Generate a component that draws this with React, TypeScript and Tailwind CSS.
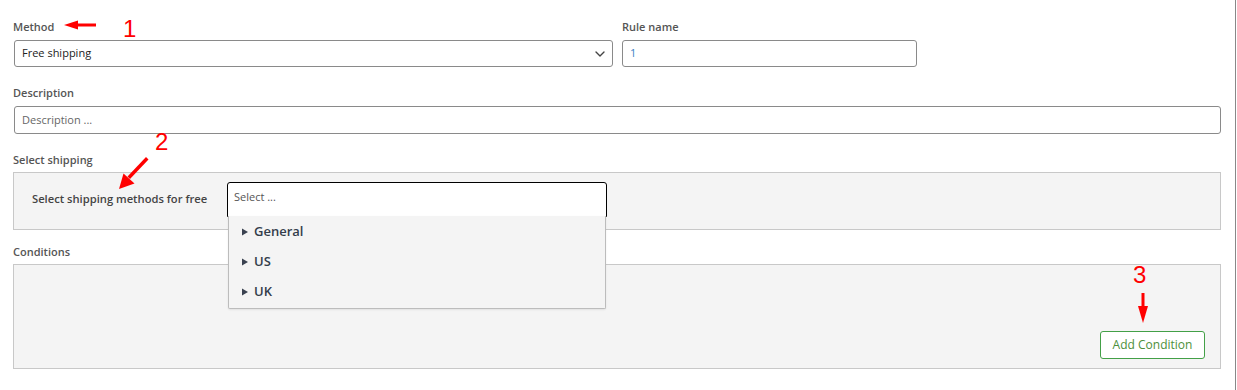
import { ChevronDown } from "lucide-react";

const font = { fontFamily: '"Open Sans", "Liberation Sans", sans-serif' };

function Label({ children }: { children: React.ReactNode }) {
  return (
    <div className="h-[14px] text-[11px] leading-[14px] font-semibold text-[#555]">
      {children}
    </div>
  );
}

function Triangle() {
  return (
    <svg width="8" height="8" viewBox="0 0 8 8" className="mr-[5px]">
      <path d="M1 0.5 L7 4 L1 7.5 Z" fill="#3a4250" />
    </svg>
  );
}

export default function App() {
  return (
    <div style={font} className="relative h-[390px] w-[1236px] border-r border-[#888] bg-white">
      <div className="flex flex-col pl-[13px] pt-[20px]">
        {/* method + rule name */}
        <div className="flex gap-[9px]">
          <div className="flex w-[600px] flex-col gap-[6px]">
            <Label>Method</Label>
            <div className="ml-px flex h-[27px] items-center justify-between rounded-[3px] border border-[#8a8a8a] pl-[7px] pr-[4px] text-[11px] text-[#222]">
              <span>Free shipping</span>
              <ChevronDown size={16} strokeWidth={2} color="#444" />
            </div>
          </div>
          <div className="flex w-[295px] flex-col gap-[6px]">
            <Label>Rule name</Label>
            <div className="flex h-[27px] items-center rounded-[3px] border border-[#8a8a8a] pl-[7px] text-[11px] text-[#3b7fc4]">
              1
            </div>
          </div>
        </div>

        {/* description */}
        <div className="mt-[19px] flex w-[1208px] flex-col gap-[6px]">
          <Label>Description</Label>
          <div className="ml-px flex h-[28px] items-center rounded-[3px] border border-[#8a8a8a] pl-[7px] text-[11px] text-[#666]">
            Description ...
          </div>
        </div>

        {/* select shipping */}
        <div className="mt-[19px] flex w-[1208px] flex-col gap-[5px]">
          <Label>Select shipping</Label>
          <div className="flex h-[58px] items-start border border-[#c8c8c8] bg-[#f4f4f4] pt-[9px]">
            <div className="flex h-[35px] w-[213px] items-center pl-[18px] text-[11.2px] font-semibold text-[#444]">
              Select shipping methods for free
            </div>
            <div className="relative w-[380px]">
              <div className="flex h-[35px] items-center rounded-t-[3px] border border-black bg-white pb-[4px] pl-[6px] text-[11px] text-[#555]">
                Select ...
              </div>
              <div className="absolute left-px right-px top-[34px] z-10 flex flex-col rounded-b-[2px] border border-t-0 border-[#bcbcbc] bg-[#f4f4f4] pb-[1px] pt-[1px] text-[13px] font-semibold text-[#333d4b] shadow-[0_1px_2px_rgba(0,0,0,0.08)]">
                {["General", "US", "UK"].map((g) => (
                  <div key={g} className="flex h-[30px] items-center pl-[12px]">
                    <Triangle />
                    {g}
                  </div>
                ))}
              </div>
            </div>
          </div>
        </div>

        {/* conditions */}
        <div className="mt-[15px] flex w-[1208px] flex-col gap-[5px]">
          <Label>Conditions</Label>
          <div className="flex h-[105px] items-end justify-end border border-[#c8c8c8] bg-[#f4f4f4] pb-[9px] pr-[15px]">
            <button className="h-[28px] w-[105px] rounded-[3px] border border-[#43a047] bg-white text-[12px] text-[#4d8f3a]">
              Add Condition
            </button>
          </div>
        </div>
      </div>

      {/* annotations */}
      <svg className="pointer-events-none absolute left-0 top-0 z-20" width="1236" height="390">
        <g fill="#ff0000" stroke="none">
          <rect x="76" y="23.5" width="20" height="3" />
          <path d="M64 25 L78 20.5 L78 29.5 Z" />
          <path d="M146 157 L148.5 159.5 L130 179 L127.5 176.5 Z" />
          <path d="M119 189 L123.5 173.5 L134.5 183.5 Z" />
          <rect x="1141.5" y="293" width="3" height="15" />
          <path d="M1138 306 L1148 306 L1143 323 Z" />
        </g>
        <g fill="#ff0000" fontFamily="Liberation Sans, sans-serif" fontSize="24">
          <text x="123" y="37">1</text>
          <text x="155" y="150">2</text>
          <text x="1133" y="283">3</text>
        </g>
      </svg>
    </div>
  );
}
